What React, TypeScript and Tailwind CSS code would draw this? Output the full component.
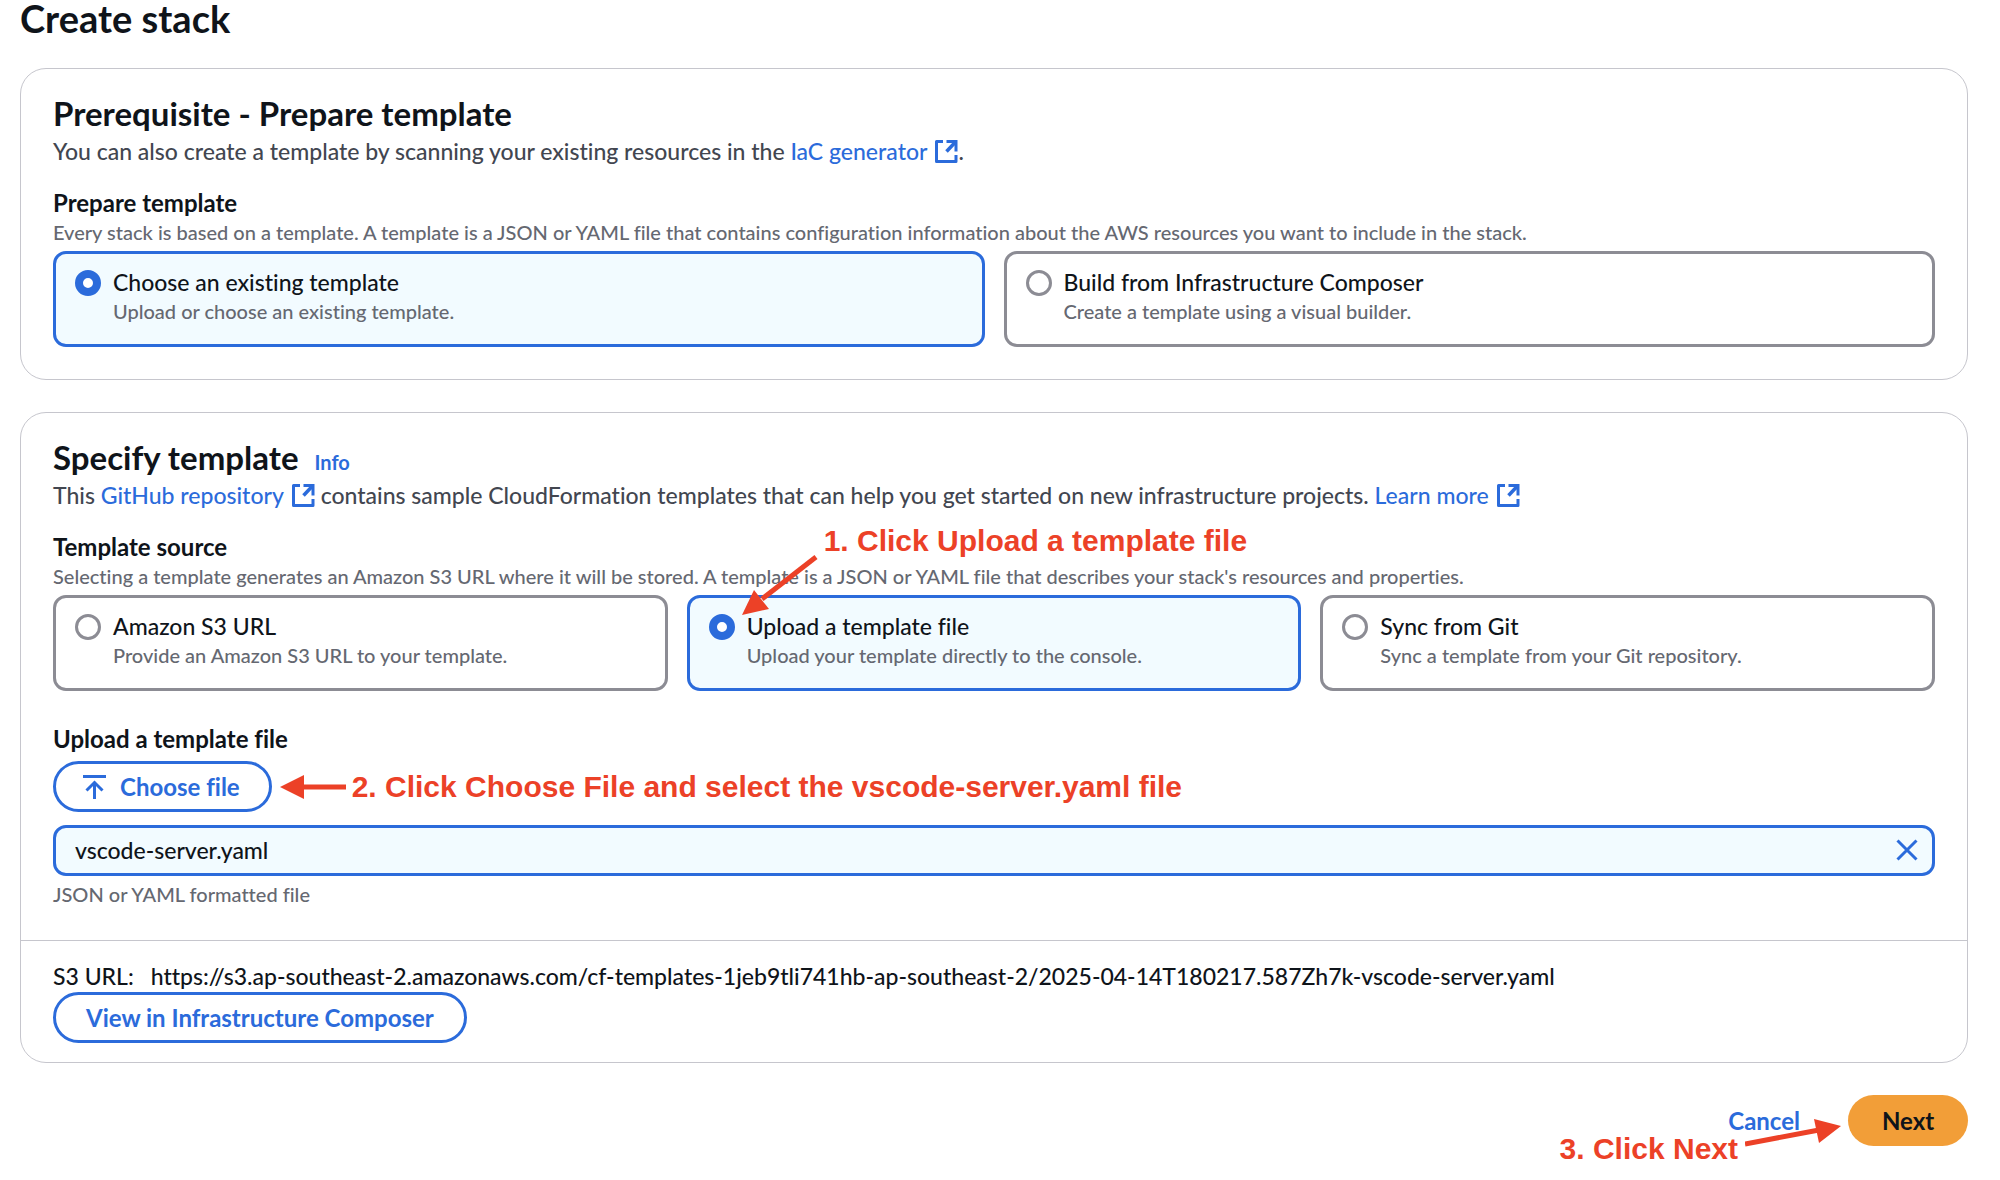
import { useState, type ReactNode } from "react";

type Option = { value: string; label: string; description: string; note?: ReactNode };

function ExternalIcon() {
  return (
    <svg
      viewBox="0 0 23 23"
      className="ml-2 inline-block h-[23px] w-[23px] align-[-3px]"
      fill="none"
      stroke="currentColor"
      strokeWidth="3"
      strokeLinejoin="round"
      aria-hidden="true"
    >
      <path d="M8 1.5H1.5V21.5H21V15" />
      <path d="M11.5 1.5H21V11.5" strokeLinejoin="miter" />
      <path d="M20.5 2L11.5 11.5" strokeWidth="3.5" />
    </svg>
  );
}

function UploadIcon() {
  return (
    <svg viewBox="0 0 23 24" className="h-6 w-[23px]" fill="none" stroke="currentColor" strokeWidth="3" aria-hidden="true">
      <path d="M0 1.5H23" />
      <path d="M11.5 8V24" />
      <path d="M3.5 15.5L11.5 7.5L19.5 15.5" />
    </svg>
  );
}

function CloseIcon() {
  return (
    <svg viewBox="0 0 22 22" className="size-[22px]" fill="none" stroke="currentColor" strokeWidth="3" aria-hidden="true">
      <path d="M1.5 1.5L20.5 20.5M20.5 1.5L1.5 20.5" />
    </svg>
  );
}

function ExternalLink({ children }: { children: ReactNode }) {
  return (
    <a href="#" className="text-[#2b6bdb]">
      {children}
      <ExternalIcon />
    </a>
  );
}

function Tiles({
  name,
  legend,
  hint,
  options,
  initial,
  columns,
}: {
  name: string;
  legend: string;
  hint: string;
  options: Option[];
  initial: string;
  columns: string;
}) {
  const [value, setValue] = useState(initial);
  return (
    <div role="radiogroup" aria-labelledby={name + "-legend"} className="mt-5">
      <p id={name + "-legend"} className="text-[24px] leading-8 font-bold">
        {legend}
      </p>
      <p className="text-[20px] leading-[26px] text-[#656871]">{hint}</p>
      <div className={"mt-1.5 grid gap-[19px] " + columns}>
        {options.map((o) => (
          <div key={o.value} className="relative">
            <label
              className={
                "flex h-full gap-3 rounded-[13px] border-3 px-[19px] pt-4 pb-5 " +
                (o.value === value ? "border-[#2b6bdb] bg-[#f2fbff]" : "border-[#8c8c94] bg-white")
              }
            >
              <input
                type="radio"
                name={name}
                checked={o.value === value}
                onChange={() => setValue(o.value)}
                aria-describedby={name + "-" + o.value}
                className="size-[26px] shrink-0 appearance-none rounded-full border-3 border-[#8c8c94] bg-white checked:border-8 checked:border-[#2b6bdb]"
              />
              <span className="flex flex-col gap-1">
                <span className="text-[23px] leading-6">{o.label}</span>
                <span id={name + "-" + o.value} className="text-[20px] leading-[26px] text-[#656871]">
                  {o.description}
                </span>
              </span>
            </label>
            {o.note}
          </div>
        ))}
      </div>
    </div>
  );
}

function UploadNote() {
  return (
    <div className="pointer-events-none absolute bottom-full left-[55px] -mb-5 flex items-start">
      <svg viewBox="0 0 76 60" className="mt-8 h-[60px] w-[76px]" aria-hidden="true">
        <path d="M74 2L20 44" stroke="#ec4127" strokeWidth="5" />
        <path d="M0 60L12 35L27 54Z" fill="#ec4127" />
      </svg>
      <p className="ml-1.5 font-['Liberation_Sans',sans-serif] text-[30px] leading-9 font-bold whitespace-nowrap text-[#ec4127]">
        1. Click Upload a template file
      </p>
    </div>
  );
}

const prepareOptions: Option[] = [
  {
    value: "existing",
    label: "Choose an existing template",
    description: "Upload or choose an existing template.",
  },
  {
    value: "composer",
    label: "Build from Infrastructure Composer",
    description: "Create a template using a visual builder.",
  },
];

const sourceOptions: Option[] = [
  { value: "s3", label: "Amazon S3 URL", description: "Provide an Amazon S3 URL to your template." },
  {
    value: "upload",
    label: "Upload a template file",
    description: "Upload your template directly to the console.",
    note: <UploadNote />,
  },
  { value: "git", label: "Sync from Git", description: "Sync a template from your Git repository." },
];

const card = "rounded-[26px] border border-[#c6c6cd] bg-white";
const outlineButton =
  "flex h-[51px] items-center rounded-full border-3 border-[#2b6bdb] bg-white text-[24px] font-bold text-[#2b6bdb]";

export default function App() {
  const [fileName, setFileName] = useState("vscode-server.yaml");
  return (
    <main className="bg-white pr-8 pb-8 pl-5 font-['Lato','Noto_Sans',sans-serif] font-medium text-[#0f141a] [font-variant-ligatures:none]">
      <h1 className="pb-8 text-[38px] leading-9 font-bold">Create stack</h1>

      <section className={card + " px-8 pt-6 pb-8"}>
        <h2 className="text-[33px] leading-10 font-bold">Prerequisite - Prepare template</h2>
        <p className="mt-0.5 text-[23px] leading-8 text-[#424650]">
          You can also create a template by scanning your existing resources in the{" "}
          <ExternalLink>IaC generator</ExternalLink>.
        </p>
        <Tiles
          name="prepare"
          legend="Prepare template"
          hint="Every stack is based on a template. A template is a JSON or YAML file that contains configuration information about the AWS resources you want to include in the stack."
          options={prepareOptions}
          initial="existing"
          columns="grid-cols-2"
        />
      </section>

      <section className={card + " mt-8"}>
        <div className="px-8 pt-6 pb-8">
          <div className="flex items-baseline gap-4">
            <h2 className="text-[33px] leading-10 font-bold">Specify template</h2>
            <a href="#" className="text-[20px] font-bold text-[#2b6bdb]">
              Info
            </a>
          </div>
          <p className="mt-0.5 text-[23px] leading-8 text-[#424650]">
            This <ExternalLink>GitHub repository</ExternalLink> contains sample CloudFormation templates that can help
            you get started on new infrastructure projects. <ExternalLink>Learn more</ExternalLink>
          </p>
          <Tiles
            name="source"
            legend="Template source"
            hint="Selecting a template generates an Amazon S3 URL where it will be stored. A template is a JSON or YAML file that describes your stack's resources and properties."
            options={sourceOptions}
            initial="upload"
            columns="grid-cols-3"
          />

          <label htmlFor="template-file" className="mt-8 block text-[24px] leading-8 font-bold">
            Upload a template file
          </label>
          <div className="mt-1.5 flex items-center">
            <button type="button" className={outlineButton + " gap-3.5 pr-[29px] pl-[27px]"}>
              <UploadIcon />
              Choose file
            </button>
            <svg viewBox="0 0 66 24" className="ml-2 h-6 w-[66px]" aria-hidden="true">
              <path d="M20 12H66" stroke="#ec4127" strokeWidth="5" />
              <path d="M0 12L24 0V24Z" fill="#ec4127" />
            </svg>
            <p className="ml-1.5 font-['Liberation_Sans',sans-serif] text-[30px] leading-9 font-bold text-[#ec4127]">
              2. Click Choose File and select the vscode-server.yaml file
            </p>
          </div>
          <div className="mt-[13px] flex h-[51px] items-center rounded-[13px] border-3 border-[#2b6bdb] bg-[#f2fbff] pr-[14px] pb-0.5 pl-[19px]">
            <input
              id="template-file"
              type="text"
              readOnly
              value={fileName}
              aria-describedby="template-file-hint"
              className="min-w-0 flex-1 bg-transparent text-[23px] leading-8 outline-none"
            />
            <button type="button" aria-label="Remove file" onClick={() => setFileName("")} className="text-[#2b6bdb]">
              <CloseIcon />
            </button>
          </div>
          <p id="template-file-hint" className="mt-1 text-[20px] leading-7 text-[#656871]">
            JSON or YAML formatted file
          </p>
        </div>

        <div className="border-t border-[#c6c6cd] px-8 py-[19px]">
          <p className="flex gap-[17px] text-[23px] leading-8">
            <span>S3 URL:</span>
            <span>
              https://s3.ap-southeast-2.amazonaws.com/cf-templates-1jeb9tli741hb-ap-southeast-2/2025-04-14T180217.587Zh7k-vscode-server.yaml
            </span>
          </p>
          <button type="button" className={outlineButton + " px-[30px]"}>
            View in Infrastructure Composer
          </button>
        </div>
      </section>

      <footer className="relative mt-8 flex items-center justify-end">
        <button type="button" className="h-[51px] px-12 text-[24px] font-bold text-[#2b6bdb]">
          Cancel
        </button>
        <button type="button" className="h-[51px] w-[120px] rounded-full bg-[#f29e38] text-[24px] font-bold">
          Next
        </button>
        <div className="pointer-events-none absolute top-6 right-[127px] flex items-start">
          <p className="mt-3 font-['Liberation_Sans',sans-serif] text-[30px] leading-9 font-bold whitespace-nowrap text-[#ec4127]">
            3. Click Next
          </p>
          <svg viewBox="0 0 96 28" className="ml-[7px] h-7 w-24" aria-hidden="true">
            <path d="M0 25L74 11" stroke="#ec4127" strokeWidth="5" />
            <path d="M96 7L69 0L74 24Z" fill="#ec4127" />
          </svg>
        </div>
      </footer>
    </main>
  );
}
